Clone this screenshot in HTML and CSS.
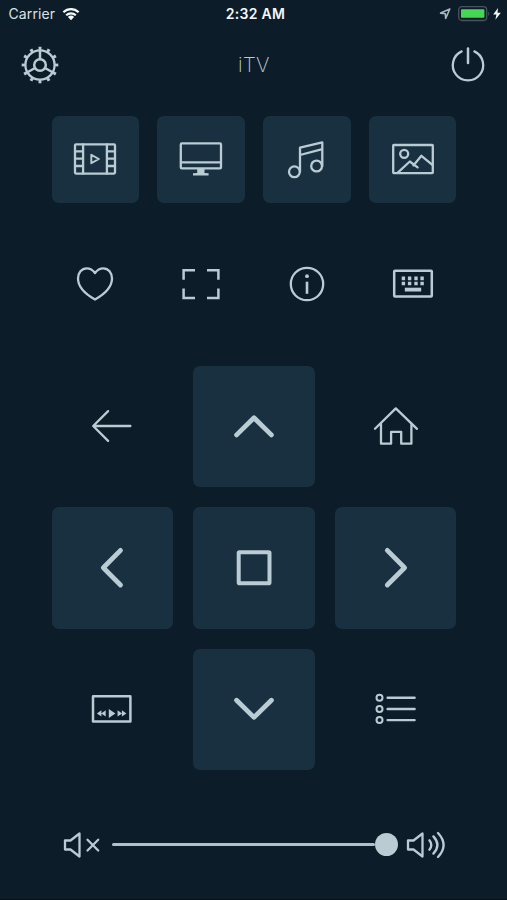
FILE: index.html
```html
<!DOCTYPE html>
<html lang="en">
<head>
  <meta charset="UTF-8">
  <title>iTV Remote</title>
  <link rel="stylesheet" href="styles.css">
</head>
<body>
  <div class="remote">

    <!-- Status bar -->
    <div class="status-bar">
      <div class="status-left">
        <span class="carrier">Carrier</span>
        <svg class="wifi" viewBox="0 0 18 14">
          <path d="M1.4 5.2A11 11 0 0 1 16.6 5.2M4.2 8.2A7 7 0 0 1 13.8 8.2" fill="none" stroke="#f4f8fa" stroke-width="2.2"/>
          <path d="M5.9 10A4.5 4.5 0 0 1 12.1 10L9 13.2Z" fill="#f4f8fa"/>
        </svg>
      </div>
      <span class="time">2:32 AM</span>
      <div class="status-right">
        <svg class="location" viewBox="0 0 12 12">
          <path d="M10.8 1L1.6 5.1L6.3 5.7L6.7 10.4Z" fill="none" stroke="#a9b5bc" stroke-width="1.6" stroke-linejoin="round"/>
        </svg>
        <svg class="battery" viewBox="0 0 33 16">
          <rect x=".7" y=".7" width="28" height="13.8" rx="3.2" fill="none" stroke="#46545f" stroke-width="1.3"/>
          <rect x="3" y="3.2" width="23.4" height="8.6" rx=".8" fill="#46d755"/>
          <path d="M30.2 5.2Q32.4 7.6 30.2 10Z" fill="#46545f"/>
        </svg>
        <svg class="bolt" viewBox="0 0 8 12">
          <path d="M5 0L.2 6.5H3.4L2.4 11.8L7.8 4.8H4.5Z" fill="#f4f8fa"/>
        </svg>
      </div>
    </div>

    <!-- Title bar -->
    <div class="nav-bar">
      <svg class="icon nav-icon" viewBox="-20 -20 40 40">
        <circle r="14.6" stroke-width="2.3"/>
        <circle r="5.8" stroke-width="2.5"/>
        <path d="M0-6V-15M-5 3L-13 7.5M5 3L13 7.5" stroke-width="2.5"/>
        <circle class="teeth" r="16.6" stroke-width="3.4" pathLength="120"/>
      </svg>
      <h1 class="title">iTV</h1>
      <svg class="icon nav-icon" viewBox="-20 -20 40 40">
        <path d="M-6.4-13.6A15.2 15.2 0 1 0 6.4-13.6" stroke-width="2.3"/>
        <path d="M0-16.5V-2" stroke-width="2.5"/>
      </svg>
    </div>

    <!-- Media sources -->
    <div class="media-row">
      <div class="tile">
        <svg class="icon" viewBox="-30 -30 60 60">
          <rect x="-20" y="-14.6" width="40" height="29.2" rx="1"/>
          <path d="M-11.9-14.6V14.6M11.9-14.6V14.6M-20-7.6H-11.9M-20-.3H-11.9M-20 7H-11.9M11.9-7.6H20M11.9-.3H20M11.9 7H20"/>
          <path d="M-3.7-4.2L3.9 0L-3.7 4.2Z" stroke-width="1.9"/>
        </svg>
      </div>
      <div class="tile">
        <svg class="icon" viewBox="-30 -30 60 60">
          <rect x="-20.2" y="-15.6" width="40.2" height="25" rx="1"/>
          <path d="M-20 3.3H20"/>
          <path class="solid" d="M-3.8 9.5H3.5V14L7.6 14.2V16.6H-8V14.2L-3.8 14Z"/>
        </svg>
      </div>
      <div class="tile">
        <svg class="icon" viewBox="-30 -30 60 60">
          <circle cx="-12.6" cy="12.8" r="5.4"/>
          <circle cx="9.6" cy="7" r="5.4"/>
          <path d="M-7 12.8V-11.3L15.3-16.6V7M-7-4L15.3-9.8"/>
        </svg>
      </div>
      <div class="tile">
        <svg class="icon" viewBox="-30 -30 60 60">
          <rect x="-19.8" y="-14" width="39.6" height="28.2" rx=".6"/>
          <circle cx="-8.8" cy="-5.2" r="4"/>
          <path d="M-15.2 13.7L-3.2 2.5L4.6 8.4M.4 6.4L8.4-3.2L19.4 5.9"/>
        </svg>
      </div>
    </div>

    <!-- Quick actions -->
    <div class="action-row">
      <svg class="icon" viewBox="-30 -30 60 60">
        <path d="M0-11C-2.3-14.2-5.3-15.7-8.3-15.7C-13.4-15.7-17-11.2-17-5.5C-17 4-8 11 0 15.5C8 11 17 4 17-5.5C17-11.2 13.4-15.7 8.3-15.7C5.3-15.7 2.3-14.2 0-11Z"/>
      </svg>
      <svg class="icon square-cap" viewBox="-30 -30 60 60">
        <path d="M-17.4-4.2V-13.8H-6M6-13.8H17.4V-4.2M17.4 4.4V14H6M-6 14H-17.4V4.4"/>
      </svg>
      <svg class="icon" viewBox="-30 -30 60 60">
        <circle r="16.2"/>
        <circle class="solid" cy="-7.8" r="1.9"/>
        <path class="butt" d="M0-2.3V9.8" stroke-width="2.6"/>
      </svg>
      <svg class="icon" viewBox="-30 -30 60 60">
        <rect x="-18.8" y="-13.3" width="37.6" height="25.9" rx=".8" stroke-width="2.5"/>
        <path class="butt" d="M-11.3-5.7H-7.9M-5.1-5.7H-1.7M1.3-5.7H4.7M7.4-5.7H10.8M-11.3-.5H-7.9M-5.1-.5H-1.7M1.3-.5H4.7M7.4-.5H10.8" stroke-width="3.7"/>
        <path class="butt" d="M-8.2 5.6H8.2" stroke-width="3.8"/>
      </svg>
    </div>

    <!-- Direction pad -->
    <div class="dpad">
      <div class="pad-cell">
        <svg class="icon" viewBox="-30 -30 60 60">
          <path d="M18.4 0H-18.6M-3.9-14.9L-18.8 0L-3.9 14.9"/>
        </svg>
      </div>
      <div class="pad-cell tile">
        <svg class="icon bold" viewBox="-30 -30 60 60">
          <path d="M-17.4 8.9L0-8.2L17.4 8.9"/>
        </svg>
      </div>
      <div class="pad-cell">
        <svg class="icon" viewBox="-30 -30 60 60">
          <path d="M-21 2.8L-.2-17.6L21 2.8M-15-2.8V17.7H-4.9V5.8H5.2V17.7H15.4V-2.8"/>
        </svg>
      </div>
      <div class="pad-cell tile">
        <svg class="icon bold" viewBox="-30 -30 60 60">
          <path d="M8.5-17.6L-8.7-.3L8.5 17"/>
        </svg>
      </div>
      <div class="pad-cell tile">
        <svg class="icon" viewBox="-30 -30 60 60">
          <rect x="-15.3" y="-15.8" width="30.8" height="31" rx=".8" stroke-width="4"/>
        </svg>
      </div>
      <div class="pad-cell tile">
        <svg class="icon bold" viewBox="-30 -30 60 60">
          <path d="M-8.7-17.6L8.6-.3L-8.7 17"/>
        </svg>
      </div>
      <div class="pad-cell">
        <svg class="icon" viewBox="-30 -30 60 60">
          <rect x="-19" y="-12.7" width="37.4" height="25.3" rx=".2" stroke-width="2.5"/>
          <path class="solid" d="M-15.1 4.4L-10.6 1.2V7.6ZM-10.8 4.4L-6.3 1.2V7.6ZM-3.2-.1L3.4 4.4L-3.2 8.9ZM5.6 1.2L10.1 4.4L5.6 7.6ZM9.9 1.2L14.4 4.4L9.9 7.6Z"/>
        </svg>
      </div>
      <div class="pad-cell tile">
        <svg class="icon bold" viewBox="-30 -30 60 60">
          <path d="M-17.4-8.7L0 8.4L17.4-8.7"/>
        </svg>
      </div>
      <div class="pad-cell">
        <svg class="icon" viewBox="-30 -30 60 60">
          <circle cx="-16.5" cy="-11.2" r="3" stroke-width="2"/>
          <circle cx="-16.5" cy="0" r="3" stroke-width="2"/>
          <circle cx="-16.5" cy="11.1" r="3" stroke-width="2"/>
          <path d="M-8.4-11.2H18.6M-8.4 0H18.6M-8.4 11.1H18.6" stroke-width="2.4"/>
        </svg>
      </div>
    </div>

    <!-- Volume -->
    <div class="volume">
      <svg class="icon mute" viewBox="0 0 38 28">
        <path d="M2 9.5H7.5L16.5 2.5V25.5L7.5 18.5H2Z"/>
        <path d="M24.5 8.7L35.2 19.5M35.2 8.7L24.5 19.5"/>
      </svg>
      <div class="slider">
        <div class="track"></div>
        <div class="knob"></div>
      </div>
      <svg class="icon loud" viewBox="0 0 40 28">
        <path d="M2 9.5H7.5L16.5 2.5V25.5L7.5 18.5H2Z"/>
        <path d="M23.4 9.3Q27.2 14 23.4 18.7M27.4 5.4Q35.4 14 27.4 22.6M32 2Q43.2 14 32 26"/>
      </svg>
    </div>

  </div>
</body>
</html>
```
FILE: styles.css
```css
* { box-sizing: border-box; }

body {
  margin: 0;
  overflow: hidden;
  background: #0c1d29;
  color: #b9ccd4;
  font-family: Inter, "Liberation Sans", sans-serif;
}

svg { display: block; }

.remote {
  height: 900px;
  border-bottom: 1px solid #05101b;
}

/* Status bar */
.status-bar {
  display: grid;
  grid-template-columns: 1fr auto 1fr;
  align-items: center;
  height: 27px;
  padding: 0 6.5px 0 8.5px;
}
.status-left, .status-right {
  display: flex;
  align-items: center;
}
.status-right { justify-content: flex-end; }
.carrier {
  font-size: 14px;
  color: #dbe2e6;
  letter-spacing: 0.1px;
}
.time {
  padding-left: 2px;
  font-size: 14px;
  font-weight: 600;
  color: #f4f8fa;
  letter-spacing: 0.3px;
}
.wifi { width: 18px; height: 14px; margin-left: 6.5px; }
.location { width: 12px; height: 12px; margin-right: 7px; }
.battery { width: 33px; height: 16px; margin-right: 2px; }
.bolt { width: 8px; height: 12px; }

/* Title bar */
.nav-bar {
  display: flex;
  align-items: center;
  justify-content: space-between;
  height: 75px;
  padding: 0 19.3px 0 20px;
}
.title {
  margin: 0;
  font-size: 20.5px;
  font-weight: 250;
  letter-spacing: 0.2px;
}

/* Icons */
.icon {
  width: 60px;
  height: 60px;
  fill: none;
  stroke: #b9ccd4;
  stroke-width: 2.3;
  stroke-linecap: round;
  stroke-linejoin: round;
}
.nav-icon { width: 40px; height: 40px; }
.bold { stroke-width: 4.8; }
.square-cap { stroke-width: 2.5; stroke-linecap: butt; stroke-linejoin: miter; }
.butt { stroke-linecap: butt; }
.solid { fill: #b9ccd4; stroke: none; }
.teeth {
  stroke-linecap: butt;
  stroke-dasharray: 3.4 6.6;
  stroke-dashoffset: 1.7;
}

.tile {
  background: #193041;
  border-radius: 7px;
}

/* Media sources */
.media-row {
  display: grid;
  grid-template-columns: repeat(4, 87.5px);
  justify-content: space-between;
  width: 405px;
  margin: 13.5px 0 0 51.5px;
}
.media-row .tile {
  display: flex;
  align-items: center;
  justify-content: center;
  height: 87.5px;
}

/* Quick actions */
.action-row {
  display: flex;
  justify-content: space-between;
  width: 377.6px;
  margin: 50.5px 0 0 65.2px;
}

/* Direction pad */
.dpad {
  display: grid;
  grid-template-columns: repeat(3, 121.5px);
  grid-auto-rows: 121.5px;
  gap: 20px 20.2px;
  margin: 52px 0 0 51.5px;
}
.pad-cell {
  display: flex;
  align-items: center;
  justify-content: center;
}

/* Volume */
.volume {
  display: flex;
  align-items: center;
  margin: 60.5px 0 0 63px;
}
.mute { width: 38px; height: 28px; }
.loud { width: 40px; height: 28px; margin-left: 8px; }
.slider {
  display: flex;
  align-items: center;
  width: 285.5px;
  margin-left: 11px;
}
.track {
  flex: 1;
  height: 3px;
  border-radius: 2px;
  background: #b0c1cd;
}
.knob {
  width: 23px;
  height: 23px;
  border-radius: 50%;
  background: #bacbd3;
}
```
